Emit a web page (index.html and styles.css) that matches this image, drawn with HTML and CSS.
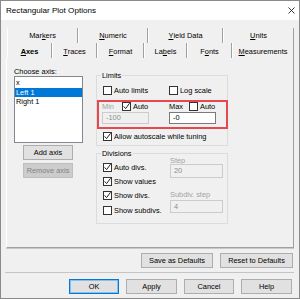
FILE: index.html
```html
<!DOCTYPE html>
<html lang="en">
	<head>
		<meta charset="UTF-8" />
		<title>Rectangular Plot Options</title>
		<link rel="stylesheet" href="styles.css">
	</head>
	<body>
		<div class="window">
			<div class="titlebar">
				<span>Rectangular Plot Options</span>
				<svg class="close" width="7" height="7" viewBox="0 0 7 7"><path d="M0.5 0.5 L6.5 6.5 M6.5 0.5 L0.5 6.5" stroke="#222" stroke-width="0.9" fill="none"/></svg>
			</div>

			<div class="client">
				<div class="tabs">
					<div class="tab-row back">
						<div class="tab">Mar<u>k</u>ers</div>
						<div class="tab"><u>N</u>umeric</div>
						<div class="tab"><u>Y</u>ield Data</div>
						<div class="tab"><u>U</u>nits</div>
					</div>
					<div class="tab-row front">
						<div class="tab active"><u>A</u>xes</div>
						<div class="tab"><u>T</u>races</div>
						<div class="tab"><u>F</u>ormat</div>
						<div class="tab">La<u>b</u>els</div>
						<div class="tab">F<u>o</u>nts</div>
						<div class="tab"><u>M</u>easurements</div>
					</div>
				</div>

				<div class="panel">
					<div class="axis-col">
						<div class="caption">Choose axis:</div>
						<ul class="listbox">
							<li>x</li>
							<li class="selected">Left 1</li>
							<li>Right 1</li>
						</ul>
						<button class="btn axis-btn">Add axis</button>
						<button class="btn axis-btn disabled">Remove axis</button>
					</div>

					<div class="settings-col">
						<fieldset class="group limits">
							<legend>Limits</legend>
							<div class="pair first">
								<label class="check"><span class="box"></span>Auto limits</label>
								<label class="check"><span class="box"></span>Log scale</label>
							</div>
							<div class="highlight">
								<div class="pair">
									<div class="minmax">
										<span class="mm-label dim">Min</span>
										<label class="check"><span class="box on"><svg viewBox="0 0 9 9"><path d="M1.6 4.4 L3.6 6.6 L7.6 1.2" /></svg></span>Auto</label>
									</div>
									<div class="minmax">
										<span class="mm-label">Max</span>
										<label class="check"><span class="box"></span>Auto</label>
									</div>
								</div>
								<div class="pair">
									<div class="field disabled">-100</div>
									<div class="field">-0</div>
								</div>
							</div>
							<label class="check tuning"><span class="box on"><svg viewBox="0 0 9 9"><path d="M1.6 4.4 L3.6 6.6 L7.6 1.2" /></svg></span>Allow autoscale while tuning</label>
						</fieldset>

						<fieldset class="group divisions">
							<legend>Divisions</legend>
							<div class="div-grid">
								<div class="div-checks">
									<label class="check"><span class="box on"><svg viewBox="0 0 9 9"><path d="M1.6 4.4 L3.6 6.6 L7.6 1.2" /></svg></span>Auto divs.</label>
									<label class="check"><span class="box on"><svg viewBox="0 0 9 9"><path d="M1.6 4.4 L3.6 6.6 L7.6 1.2" /></svg></span>Show values</label>
									<label class="check"><span class="box on"><svg viewBox="0 0 9 9"><path d="M1.6 4.4 L3.6 6.6 L7.6 1.2" /></svg></span>Show divs.</label>
									<label class="check"><span class="box"></span>Show subdivs.</label>
								</div>
								<div class="div-steps">
									<span class="step-label dim">Step</span>
									<div class="field disabled tall">20</div>
									<span class="step-label dim second">Subdiv. step</span>
									<div class="field disabled tall sub">4</div>
								</div>
							</div>
						</fieldset>
					</div>
				</div>

				<div class="defaults-row">
					<button class="btn wide">Save as Defaults</button>
					<button class="btn wide reset">Reset to Defaults</button>
				</div>

				<div class="separator"></div>

				<div class="dialog-buttons">
					<button class="btn default">OK</button>
					<button class="btn">Apply</button>
					<button class="btn">Cancel</button>
					<button class="btn">Help</button>
				</div>
			</div>
		</div>
	</body>
</html>
```

FILE: styles.css
```css
:root {
	--face: #f0f0f0;
	--btn: #e1e1e1;
	--btn-border: #adadad;
	--shadow: #a0a0a0;
	--dim: #a3a3a3;
	--select: #0078d7;
	--mark: #e5484e;
}

* {
	box-sizing: border-box;
}

body {
	margin: 0;
	font-family: 'Liberation Sans', Arial, sans-serif;
	font-size: 7.4px;
	color: #000;
	background: #fff;
}

.window {
	width: 300px;
	height: 299px;
	border: 1px solid #8a8a8a;
	background: var(--face);
	display: flex;
	flex-direction: column;
}

.titlebar {
	height: 19px;
	background: #fff;
	display: flex;
	align-items: center;
	justify-content: space-between;
	padding: 0 4px 0 5px;
	font-size: 8.1px;
}

.close {
	display: block;
}

.client {
	padding: 8px 5px 0 5px;
	display: flex;
	flex-direction: column;
}

/* tab strip, two rows */
.tabs {
	margin-left: 1px;
}

.tab-row {
	display: grid;
	height: 15px;
}

.tab-row.back {
	grid-template-columns: 71px 70px 75px 1fr;
}

.tab-row.front {
	grid-template-columns: 45px 45px 47px 43px 45px 1fr;
}

.tab {
	display: flex;
	align-items: center;
	justify-content: center;
	border-left: 1px solid #fff;
	border-right: 1px solid var(--shadow);
	white-space: nowrap;
}

.front .tab {
	padding-top: 2px;
}

.tab.active {
	font-weight: bold;
}

/* page of the tab control */
.panel {
	height: 190px;
	border-left: 1px solid #fff;
	border-right: 1px solid var(--shadow);
	border-bottom: 1px solid var(--shadow);
	box-shadow: 0 1px 0 #c8c8c8;
	display: flex;
	padding: 9px 0 0 7px;
}

.axis-col {
	width: 69px;
	display: flex;
	flex-direction: column;
}

.caption {
	line-height: 9px;
	height: 9px;
}

.listbox {
	list-style: none;
	margin: 0;
	padding: 1px 0 0;
	height: 67px;
	background: #fff;
	border: 1px solid #828790;
}

.listbox li {
	height: 9.5px;
	line-height: 9.5px;
	padding-left: 1px;
}

.listbox li.selected {
	background: var(--select);
	color: #fff;
}

.btn {
	font: inherit;
	color: #000;
	height: 15px;
	padding: 0;
	background: var(--btn);
	border: 1px solid var(--btn-border);
	white-space: nowrap;
}

.btn.disabled {
	background: #cccccc;
	border-color: #bfbfbf;
	color: #838383;
}

.btn.default {
	border-color: var(--select);
	box-shadow: inset 0 0 0 1px #8cbfe8;
}

.axis-btn {
	width: 50px;
	margin: 2px 0 0 9px;
}

.axis-btn.disabled {
	margin-top: 3px;
}

.settings-col {
	width: 132px;
	margin: 4px 0 0 13px;
}

.group {
	margin: 0;
	border: 1px solid #dcdcdc;
	padding: 0 0 4px 6px;
	min-width: 0;
}

.group legend {
	padding: 0 1px;
	margin-left: -2px;
	line-height: 9px;
}

.pair {
	display: grid;
	grid-template-columns: 66px 1fr;
	align-items: center;
}

.pair.first {
	height: 10px;
	margin-top: 5px;
}

.check {
	display: flex;
	align-items: center;
	gap: 2px;
	white-space: nowrap;
}

.box {
	width: 9px;
	height: 9px;
	flex: none;
	background: #fff;
	border: 1px solid #333;
	position: relative;
}

.box svg {
	position: absolute;
	left: -1px;
	top: -1px;
	width: 9px;
	height: 9px;
	fill: none;
	stroke: #222;
	stroke-width: 1;
}

/* red annotation frame round min/max */
.highlight {
	margin: 5px -1px 0 -6px;
	border: 2px solid var(--mark);
	padding: 0 0 3px 3px;
}

.highlight .pair {
	grid-template-columns: 67px 1fr;
}

.minmax {
	display: flex;
	align-items: center;
	height: 8px;
}

.mm-label {
	width: 20px;
}

.dim {
	color: var(--dim);
}

.field {
	width: 47px;
	height: 12px;
	line-height: 10px;
	padding-left: 3px;
	background: #fff;
	border: 1px solid #7a7a7a;
	margin-top: 2px;
}

.field.disabled {
	background: var(--face);
	border-color: #cccccc;
	color: #8d8d8d;
}

.tuning {
	height: 10px;
	margin-top: 2px;
}

.divisions {
	margin-top: 3px;
	padding-bottom: 6px;
}

.div-grid {
	display: grid;
	grid-template-columns: 67px 53px;
}

.div-checks {
	padding-top: 2px;
}

.div-checks .check {
	height: 14.3px;
}

.div-steps {
	display: flex;
	flex-direction: column;
}

.step-label {
	line-height: 8px;
	margin-top: -1px;
}

.step-label.second {
	margin-top: 13px;
}

.field.tall {
	width: 53px;
	height: 14px;
	line-height: 12px;
	margin-top: -1px;
}

.field.tall.sub {
	margin-top: 1px;
	height: 13px;
	line-height: 11px;
}

.defaults-row {
	display: flex;
	justify-content: flex-end;
	gap: 7px;
	margin-top: 5px;
	padding-right: 1px;
}

.btn.wide {
	width: 72px;
}

.btn.wide.reset {
	width: 73px;
}

.separator {
	margin: 4px 0 0 -1px;
	border-top: 1px solid #c4c4c4;
}

.dialog-buttons {
	display: flex;
	justify-content: flex-end;
	gap: 7px;
	margin-top: 6px;
	padding-right: 2px;
}

.dialog-buttons .btn {
	width: 50px;
}

.dialog-buttons .btn:nth-child(even) {
	width: 51px;
}
```
